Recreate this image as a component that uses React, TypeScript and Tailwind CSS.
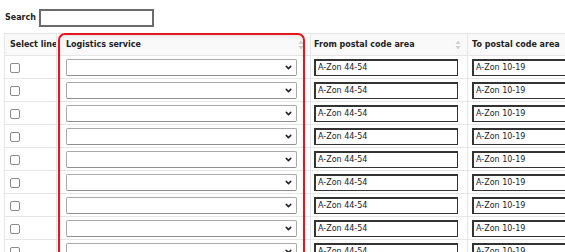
import { ChevronDown } from "lucide-react";

const rows = Array.from({ length: 9 }, (_, i) => ({
  id: i,
  from: "A-Zon 44-54",
  to: "A-Zon 10-19",
}));

function SortIcon() {
  return (
    <svg width="6" height="10" viewBox="0 0 6 10" className="shrink-0">
      <path d="M3 0.5 L5.5 4 H0.5 Z" fill="#d0d0d0" />
      <path d="M3 9.5 L5.5 6 H0.5 Z" fill="#d0d0d0" />
    </svg>
  );
}

function HeaderCell({ label, sort, className }: { label: string; sort?: boolean; className?: string }) {
  return (
    <th className={`h-[22px] border-b border-r border-[#e6e6e6] bg-[#f9f9f9] p-0 text-left font-bold ${className ?? ""}`}>
      <div className="flex items-center justify-between pr-[6px] overflow-hidden whitespace-nowrap">
        <span>{label}</span>
        {sort && <SortIcon />}
      </div>
    </th>
  );
}

export default function App() {
  return (
    <div
      className="relative w-[565px] h-[252px] overflow-hidden bg-white text-[8px] text-[#222]"
      style={{ fontFamily: '"DejaVu Sans", Verdana, sans-serif' }}
    >
      {/* Search */}
      <div className="flex items-center pl-[5px] pt-[9px]">
        <span className="font-bold">Search</span>
        <input className="ml-[3px] w-[115px] h-[18px] border-2 border-[#6b6b6b] bg-white outline-none" />
      </div>

      <table className="ml-[4px] mt-[6px] w-[640px] table-fixed border-collapse border-l border-t border-[#e6e6e6]">
        <colgroup>
          <col className="w-[52px]" />
          <col className="w-[254px]" />
          <col className="w-[157px]" />
          <col className="w-[177px]" />
        </colgroup>
        <thead>
          <tr>
            <HeaderCell label="Select line" className="pl-[5px]" />
            <HeaderCell label="Logistics service" sort className="pl-[9px]" />
            <HeaderCell label="From postal code area" sort className="pl-[3px]" />
            <HeaderCell label="To postal code area" sort className="pl-[4px]" />
          </tr>
        </thead>
        <tbody>
          {rows.map((r) => (
            <tr key={r.id} className="h-[23px]">
              <td className="border-b border-r border-[#e6e6e6] p-0 pl-[5px]">
                <span className="block w-[10px] h-[10px] rounded-[2px] border border-[#8a8a8a] bg-white mt-[2px]" />
              </td>
              <td className="border-b border-r border-[#e6e6e6] p-0 pl-[9px]">
                <div className="flex items-center justify-end w-[231px] h-[17px] rounded-[2px] border border-[#a9a9a9] border-b-[#8f8f8f] bg-white pr-[3px]">
                  <ChevronDown size={9} strokeWidth={4} color="#222" />
                </div>
              </td>
              <td className="border-b border-r border-[#e6e6e6] p-0 pl-[3px]">
                <div className="flex items-center w-[144px] h-[17px] border-t-2 border-l-2 border-r border-b border-[#333] bg-white pl-[2px] whitespace-nowrap">
                  {r.from}
                </div>
              </td>
              <td className="border-b border-r border-[#e6e6e6] p-0 pl-[4px]">
                <div className="flex items-center w-[144px] h-[17px] border-t-2 border-l-2 border-r border-b border-[#333] bg-white pl-[2px] whitespace-nowrap">
                  {r.to}
                </div>
              </td>
            </tr>
          ))}
        </tbody>
      </table>

      {/* highlight around the Logistics service column */}
      <div className="pointer-events-none absolute left-[58px] top-[33px] w-[247px] h-[260px] rounded-[7px] border-2 border-[#e8141b] shadow-[inset_0_2px_4px_rgba(0,0,0,0.08)]" />
    </div>
  );
}
